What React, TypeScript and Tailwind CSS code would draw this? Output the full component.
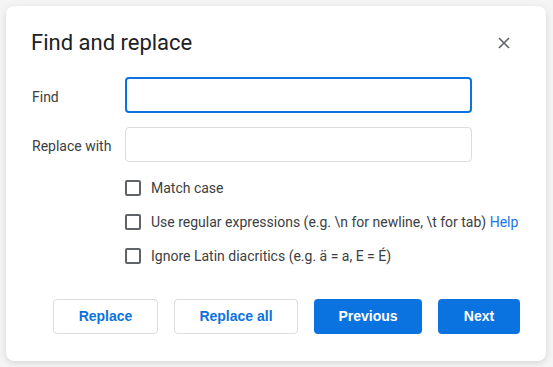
const options = [
  { label: 'Match case' },
  { label: 'Use regular expressions (e.g. \\n for newline, \\t for tab)', help: true },
  { label: 'Ignore Latin diacritics (e.g. ä = a, E = É)' },
]

const buttons = [
  { label: 'Replace', width: 'w-[105px]', primary: false },
  { label: 'Replace all', width: 'w-[124px]', primary: false },
  { label: 'Previous', width: 'w-[108px]', primary: true },
  { label: 'Next', width: 'w-[82px]', primary: true },
]

export default function App() {
  return (
    <div className="w-[553px] h-[367px] bg-[#f4f4f4] p-[6px] font-['Roboto',sans-serif]">
      <div className="w-[540px] h-[355px] bg-white rounded-[8px] shadow-[0_2px_6px_rgba(0,0,0,0.12)] pt-[23px] pl-[26px] pr-[26px]">

        {/* Header */}
        <div className="flex items-center justify-between h-[28px]">
          <h1 className="text-[22px] leading-[28px] text-[#202124] -ml-[1px]">Find and replace</h1>
          <button className="w-[20px] h-[20px] mr-[6px] flex items-center justify-center text-[#5f6368]">
            <svg width="12" height="12" viewBox="0 0 12 12" fill="none" stroke="currentColor" strokeWidth="1.6">
              <path d="M1 1 L11 11 M11 1 L1 11" />
            </svg>
          </button>
        </div>

        {/* Fields */}
        <div className="flex items-center mt-[20px]">
          <label className="w-[93px] pt-[4px] text-[14px] text-[#3c4043]">Find</label>
          <input className="w-[347px] h-[36px] rounded-[4px] border-2 border-[#0b73e0] outline-none px-2" />
        </div>
        <div className="flex items-center mt-[14px]">
          <label className="w-[93px] pt-[4px] text-[14px] text-[#3c4043]">Replace with</label>
          <input className="w-[347px] h-[35px] rounded-[4px] border border-[#dadce0] outline-none px-2" />
        </div>

        {/* Options */}
        <div className="flex flex-col gap-[14px] mt-[16px] pl-[93px]">
          {options.map(({ label, help }) => (
            <div key={label} className="flex items-center h-[20px]">
              <span className="w-[16px] h-[16px] border-2 border-[#5f6368] rounded-[2px] shrink-0" />
              <span className="ml-[10px] text-[14px] text-[#3c4043] whitespace-nowrap">
                {label}
                {help && <span className="text-[#1a73e8]"> Help</span>}
              </span>
            </div>
          ))}
        </div>

        {/* Actions */}
        <div className="flex justify-end gap-[16px] mt-[33px]">
          {buttons.map(({ label, width, primary }) => (
            <button
              key={label}
              className={
                primary
                  ? `${width} h-[35px] rounded-[4px] bg-[#0b73e0] text-white text-[14px] font-bold font-['Liberation_Sans',sans-serif]`
                  : `${width} h-[35px] rounded-[4px] border border-[#dadce0] bg-white text-[#0b73e0] text-[14px] font-bold font-['Liberation_Sans',sans-serif]`
              }
            >
              {label}
            </button>
          ))}
        </div>

      </div>
    </div>
  )
}
